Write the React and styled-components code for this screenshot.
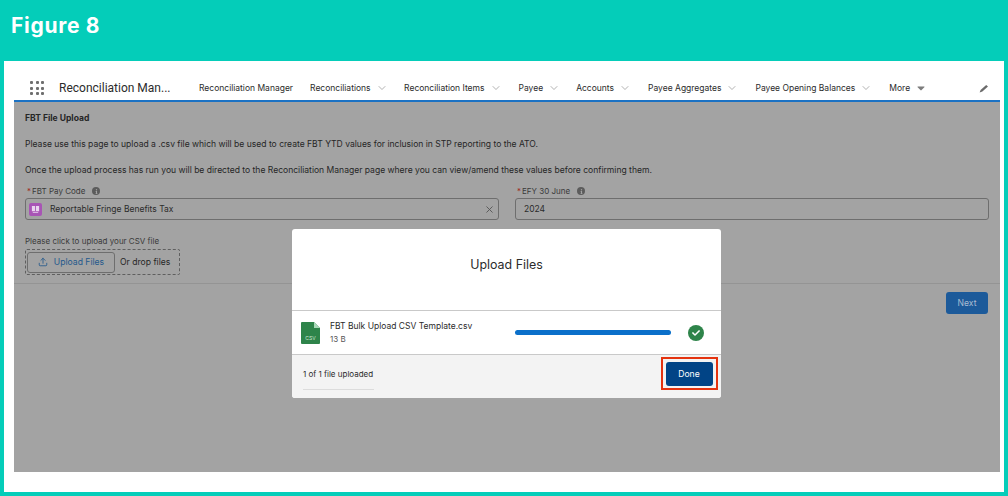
import React from "react";
import styled, { createGlobalStyle } from "styled-components";
import { FiChevronDown, FiX } from "react-icons/fi";
import { FaCheck, FaInfo, FaCaretDown } from "react-icons/fa";
import { LuUpload } from "react-icons/lu";

const Global = createGlobalStyle`
  html, body { margin: 0; padding: 0; }
  body { font-family: Inter, "Liberation Sans", sans-serif; }
  * { box-sizing: border-box; }
`;

const Page = styled.div`
  width: 1008px;
  height: 496px;
  background: #04cdb9;
  display: flex;
  flex-direction: column;
  overflow: hidden;
`;

const Banner = styled.h1`
  height: 61px;
  margin: 0;
  padding: 12px 0 0 11px;
  color: #fff;
  font-size: 21px;
  line-height: 27px;
  font-weight: 700;
  letter-spacing: 0.7px;
`;

const Frame = styled.div`
  flex: 1;
  margin: 0 4px 4px;
  padding: 0 4px 20px 10px;
  background: #fff;
  display: flex;
  flex-direction: column;
`;

const NavBar = styled.nav`
  height: 41px;
  flex: none;
  padding: 15px 11px 0 16px;
  border-bottom: 2px solid #1b72c4;
  display: flex;
  align-items: center;
  color: #2b2b2b;
`;

const Waffle = styled.div`
  display: grid;
  grid-template-columns: repeat(3, 3px);
  gap: 2.5px;
  margin-right: 15px;
  span {
    width: 3px;
    height: 3px;
    border-radius: 1px;
    background: #6f6f6f;
  }
`;

const AppName = styled.div`
  width: 140px;
  font-family: Roboto, sans-serif;
  font-size: 12px;
  flex: none;
  white-space: nowrap;
`;

const NavItem = styled.div`
  font-size: 8.5px;
  white-space: nowrap;
  display: flex;
  align-items: center;
  gap: 5px;
  margin-right: ${(p) => p.$gap}px;
  svg {
    color: #7d7d7d;
    width: 12px;
    height: 12px;
    stroke-width: 1.2;
  }
`;

const EditIcon = styled.svg`
  margin-left: auto;
  width: 10px;
  height: 9px;
`;

const Panel = styled.main`
  flex: 1;
  position: relative;
  background: #a3a3a3;
  color: #262626;
  font-size: 8.55px;
  display: flex;
  flex-direction: column;
`;

const Body = styled.div`
  padding: 10px 10px 0 11px;
  height: 182px;
  border-bottom: 1px solid #949494;
  flex: none;
`;

const Title = styled.div`
  font-weight: 700;
  line-height: 12px;
  margin-bottom: 15px;
`;

const Para = styled.p`
  margin: 0;
  line-height: 11px;
  & + & {
    margin-top: 15px;
  }
`;

const FieldRow = styled.div`
  display: grid;
  grid-template-columns: 474px 474px;
  gap: 16px;
  margin-top: 8px;
`;

const Label = styled.div`
  height: 14px;
  display: flex;
  align-items: center;
  gap: 7px;
  font-size: 8px;
  color: #3a3a3a;
  b {
    color: #a02a20;
    font-weight: 400;
    margin-right: -6px;
    margin-left: 2px;
  }
`;

const Info = styled.span`
  width: 8px;
  height: 8px;
  border-radius: 50%;
  background: #5c5c5c;
  color: #a3a3a3;
  display: inline-flex;
  align-items: center;
  justify-content: center;
  svg {
    width: 5px;
    height: 5px;
  }
`;

const Input = styled.div`
  height: 22px;
  border: 1px solid #6e6e6e;
  border-radius: 3px;
  display: flex;
  align-items: center;
  padding: 0 4px 0 ${(p) => p.$pad}px;
  font-size: 8.5px;
  color: #2b2b2b;
`;

const PayIcon = styled.span`
  width: 13px;
  height: 13px;
  border-radius: 2px;
  background: #a855b5;
  margin-right: 8px;
  display: flex;
  align-items: center;
  justify-content: center;
  svg {
    width: 9px;
    height: 9px;
  }
`;

const ClearIcon = styled(FiX)`
  margin-left: auto;
  margin-right: -1px;
  width: 11px;
  height: 11px;
  color: #555;
`;

const UploadLabel = styled.div`
  margin-top: 16px;
  font-size: 8px;
  line-height: 11px;
  color: #3a3a3a;
`;

const DropZone = styled.div`
  width: 155px;
  height: 26px;
  margin-top: 2px;
  padding-left: 1px;
  border: 1px dashed #5f5f5f;
  border-radius: 2px;
  display: flex;
  align-items: center;
  font-size: 8.6px;
`;

const UploadButton = styled.div`
  width: 88px;
  height: 21px;
  border: 1px solid #6e6e6e;
  border-radius: 3px;
  color: #24598c;
  display: flex;
  align-items: center;
  justify-content: center;
  gap: 6px;
  margin-right: 5px;
  svg {
    width: 10px;
    height: 10px;
  }
`;

const Footer = styled.div`
  display: flex;
  justify-content: flex-end;
  padding: 8px 12px 0 0;
`;

const NextButton = styled.div`
  width: 42px;
  height: 22px;
  background: #1c5a9a;
  border-radius: 3px;
  color: #a9bdd2;
  font-size: 8.6px;
  display: flex;
  align-items: center;
  justify-content: center;
`;

const Modal = styled.section`
  position: absolute;
  left: 278px;
  top: 127px;
  width: 429px;
  height: 169px;
  background: #fff;
  border-radius: 3px;
  display: flex;
  flex-direction: column;
  color: #2b2b2b;
`;

const ModalHead = styled.h2`
  height: 82px;
  margin: 0;
  flex: none;
  border-bottom: 1px solid #c9c9c9;
  display: flex;
  align-items: center;
  justify-content: center;
  padding-bottom: 11px;
  font-size: 12.4px;
  font-weight: 400;
`;

const FileRow = styled.div`
  height: 44px;
  flex: none;
  padding: 0 17px 0 9px;
  border-bottom: 1px solid #c9c9c9;
  display: flex;
  align-items: center;
`;

const FileIcon = styled.svg`
  width: 19px;
  height: 22px;
  margin-right: 10px;
  flex: none;
`;

const FileInfo = styled.div`
  width: 185px;
  flex: none;
  font-size: 8.5px;
  line-height: 13px;
  small {
    display: block;
    font-size: 8px;
    color: #555;
  }
`;

const Progress = styled.div`
  width: 156px;
  height: 5px;
  border-radius: 3px;
  background: #0b70ca;
  flex: none;
`;

const CheckBadge = styled.span`
  width: 16px;
  height: 16px;
  margin-left: auto;
  border-radius: 50%;
  background: #2e844a;
  color: #fff;
  display: flex;
  align-items: center;
  justify-content: center;
  svg {
    width: 8px;
    height: 8px;
  }
`;

const ModalFoot = styled.div`
  flex: 1;
  background: #f3f3f3;
  border-radius: 0 0 3px 3px;
  display: flex;
  align-items: flex-start;
  justify-content: space-between;
  padding: 2px 3px 0 11px;
`;

const Count = styled.div`
  width: 71px;
  height: 21px;
  margin-top: 12px;
  font-size: 8px;
  white-space: nowrap;
  line-height: 11px;
  border-bottom: 1px solid #dcdcdc;
`;

const Callout = styled.div`
  border: 2.5px solid #e5330f;
  padding: 2.5px 3.5px 2.5px 2.5px;
`;

const DoneButton = styled.div`
  width: 47px;
  height: 24px;
  background: #014486;
  border-radius: 3px;
  color: #fff;
  font-size: 8.6px;
  display: flex;
  align-items: center;
  justify-content: center;
`;

const navItems = [
  { label: "Reconciliation Manager", gap: 17 },
  { label: "Reconciliations", chevron: true, gap: 16.5 },
  { label: "Reconciliation Items", chevron: true, gap: 17 },
  { label: "Payee", chevron: true, gap: 16 },
  { label: "Accounts", chevron: true, gap: 17 },
  { label: "Payee Aggregates", chevron: true, gap: 17 },
  { label: "Payee Opening Balances", chevron: true, gap: 17 },
];

export default function App() {
  return (
    <Page>
      <Global />
      <Banner>Figure 8</Banner>
      <Frame>
        <NavBar>
          <Waffle>
            {Array.from({ length: 9 }).map((_, i) => (
              <span key={i} />
            ))}
          </Waffle>
          <AppName>Reconciliation Man...</AppName>
          {navItems.map(({ label, chevron, gap }) => (
            <NavItem key={label} $gap={gap}>
              {label}
              {chevron && <FiChevronDown />}
            </NavItem>
          ))}
          <NavItem $gap={0}>
            More
            <FaCaretDown />
          </NavItem>
          <EditIcon viewBox="0 0 10 9">
            <path d="M0.6 8.6l1-2.6 5.6-5 1.8 1.6-5.6 5z" fill="#6b6b6b" />
          </EditIcon>
        </NavBar>
        <Panel>
          <Body>
            <Title>FBT File Upload</Title>
            <Para>
              Please use this page to upload a .csv file which will be used to
              create FBT YTD values for inclusion in STP reporting to the ATO.
            </Para>
            <Para>
              Once the upload process has run you will be directed to the
              Reconciliation Manager page where you can view/amend these values
              before confirming them.
            </Para>
            <FieldRow>
              <div>
                <Label>
                  <b>*</b>FBT Pay Code
                  <Info>
                    <FaInfo />
                  </Info>
                </Label>
                <Input $pad={3}>
                  <PayIcon>
                    <svg viewBox="0 0 10 10" fill="#e9d5ee">
                      <path d="M1 1h8v6H1zM2 8h6v1H2z" />
                      <path d="M5 1v6" stroke="#a855b5" strokeWidth="1" />
                    </svg>
                  </PayIcon>
                  Reportable Fringe Benefits Tax
                  <ClearIcon />
                </Input>
              </div>
              <div>
                <Label>
                  <b>*</b>EFY 30 June
                  <Info>
                    <FaInfo />
                  </Info>
                </Label>
                <Input $pad={8}>2024</Input>
              </div>
            </FieldRow>
            <UploadLabel>Please click to upload your CSV file</UploadLabel>
            <DropZone>
              <UploadButton>
                <LuUpload />
                Upload Files
              </UploadButton>
              Or drop files
            </DropZone>
          </Body>
          <Footer>
            <NextButton>Next</NextButton>
          </Footer>
          <Modal>
            <ModalHead>Upload Files</ModalHead>
            <FileRow>
              <FileIcon viewBox="0 0 19 22">
                <path
                  d="M1 0h12l6 6v15a1 1 0 0 1-1 1H1a1 1 0 0 1-1-1V1a1 1 0 0 1 1-1z"
                  fill="#2e844a"
                />
                <path d="M13 0l6 6h-6z" fill="#a9d8b8" />
                <text
                  x="9.5"
                  y="18"
                  fontSize="5"
                  fill="#cfe8d6"
                  textAnchor="middle"
                >
                  CSV
                </text>
              </FileIcon>
              <FileInfo>
                FBT Bulk Upload CSV Template.csv
                <small>13 B</small>
              </FileInfo>
              <Progress />
              <CheckBadge>
                <FaCheck />
              </CheckBadge>
            </FileRow>
            <ModalFoot>
              <Count>1 of 1 file uploaded</Count>
              <Callout>
                <DoneButton>Done</DoneButton>
              </Callout>
            </ModalFoot>
          </Modal>
        </Panel>
      </Frame>
    </Page>
  );
}
